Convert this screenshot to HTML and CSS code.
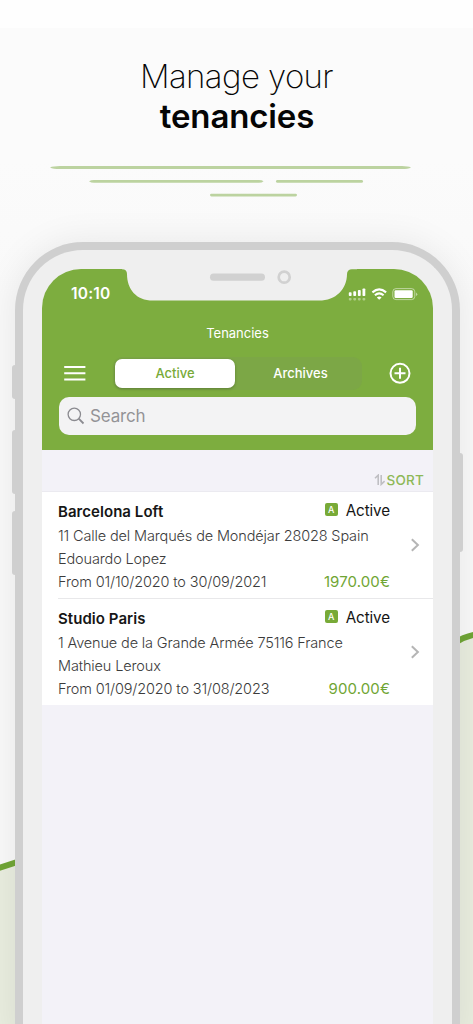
FILE: index.html
```html
<!DOCTYPE html>
<html lang="en">
<head>
<meta charset="utf-8">
<title>Manage your tenancies</title>
<link rel="stylesheet" href="styles.css">
</head>
<body>
<main class="stage">
  <svg class="landscape" width="473" height="1024" viewBox="0 0 473 1024" aria-hidden="true">
    <path class="hill" d="M0 867L20 860V1024H0Z"/>
    <path class="ridge" d="M-2 868.2L20 861.2"/>
    <path class="hill" d="M454 643Q465 637 475 636V1024H454Z"/>
    <path class="ridge" d="M454 643.2Q464 636.6 475 634.6"/>
  </svg>
  <h1 class="headline"><span class="light">Manage your</span><span class="strong">tenancies</span></h1>
  <svg class="strokes" width="473" height="40" viewBox="0 160 473 40" aria-hidden="true">
    <path d="M50 167.6Q53 166.1 60 166.1H402Q408 166.1 411 167.6Q408 169.1 402 169.1H60Q53 169.1 50 167.6Z"/>
    <path d="M89 181.3Q91 179.9 94 179.9H259Q262 179.9 263.5 181.3Q262 182.8 259 182.8H94Q91 182.8 89 181.3Z"/>
    <rect x="276" y="180" width="87" height="2.8" rx="1.4"/>
    <rect x="210" y="193.7" width="87" height="2.7" rx="1.4"/>
  </svg>
  <div class="device">
    <i class="key key-mute"></i><i class="key key-up"></i><i class="key key-down"></i><i class="key key-power"></i>
    <section class="screen">
      <svg class="notch" width="240" height="33" viewBox="0 0 240 33" aria-hidden="true">
        <path fill="#efefef" d="M0-1V0.3H80C83.5 0.3 85 2 85 5C85 20 94 31.6 111 31.6H277C294 31.6 305 20 305 5C305 2 307 0.3 310 0.3H315V-1Z" transform="translate(-80 0)"/>
        <rect x="88" y="4.6" width="55" height="7.2" rx="3.6" fill="#d1d1d1"/>
        <circle cx="162.2" cy="8.2" r="5.5" fill="none" stroke="#d1d1d1" stroke-width="2.7"/>
      </svg>
      <header class="topbar">
        <div class="status">
          <span class="time">10:10</span>
          <svg width="70" height="14" viewBox="348 286 70 14" aria-hidden="true">
            <g fill="#fff"><rect x="348.8" y="291.2" width="2.8" height="3.8" rx=".8"/><rect x="353.3" y="290.2" width="2.8" height="4.8" rx=".8"/><rect x="357.9" y="289" width="2.8" height="6" rx=".8"/><rect x="362.5" y="287.4" width="2.8" height="7.6" rx=".8"/></g>
            <g fill="#fff" opacity=".4"><rect x="348.8" y="297" width="2.8" height="2.4" rx=".8"/><rect x="353.3" y="297" width="2.8" height="2.4" rx=".8"/><rect x="357.9" y="297" width="2.8" height="2.4" rx=".8"/><rect x="362.5" y="297" width="2.8" height="2.4" rx=".8"/></g>
            <path d="M372.4 291.4Q379.2 285.3 386.1 291.4M374.9 294.2Q379.2 290.6 383.6 294.2" fill="none" stroke="#fff" stroke-width="2.1"/>
            <path d="M379.2 298.7L376.8 296.4Q379.2 294.4 381.6 296.4Z" fill="#fff"/>
            <rect x="392.8" y="287.6" width="22" height="11" rx="3.2" fill="none" stroke="#fff" opacity=".5"/>
            <rect x="394.5" y="289.3" width="18.2" height="7.6" rx="1.2" fill="#fff"/>
            <path d="M416 291.4Q418.6 293.2 416 295Z" fill="#fff" opacity=".5"/>
          </svg>
        </div>
        <div class="title">Tenancies</div>
        <nav class="controls">
          <svg width="22" height="16" viewBox="0 0 22 16" aria-hidden="true"><path d="M.2 2H21.4M.2 8.3H21.4M.2 14.4H21.4" stroke="#fff" stroke-width="2"/></svg>
          <div class="segments"><span class="segment selected">Active</span><span class="segment">Archives</span></div>
          <svg width="22" height="22" viewBox="0 0 22 22" aria-hidden="true"><g fill="none" stroke="#fff" stroke-width="2"><circle cx="11" cy="11.3" r="9.5"/><path d="M5.5 11.3H16.5M11 5.8V16.8"/></g></svg>
        </nav>
        <div class="search">
          <svg width="18" height="18" viewBox="0 0 18 18" aria-hidden="true"><g fill="none" stroke="#8b8b90" stroke-width="1.3"><circle cx="7.3" cy="7.3" r="6.2"/><path d="M11.7 11.7L16.5 16.5" stroke-width="1.8"/></g></svg>
          <span>Search</span>
        </div>
      </header>
      <div class="sort">
        <svg width="12" height="12" viewBox="0 0 12 12" aria-hidden="true"><path d="M1 4.3L4.2 1.2V11M7.2 1V10.4L10.6 7.2" fill="none" stroke="#bfbfc3" stroke-width="1.6"/></svg>
        <span>SORT</span>
      </div>
      <ul class="list">
        <li class="tenancy">
          <div class="info">
            <div class="row"><strong class="name">Barcelona Loft</strong><span class="state"><b>A</b><span>Active</span></span></div>
            <div class="row"><span>11 Calle del Marqués de Mondéjar 28028 Spain</span></div>
            <div class="row"><span>Edouardo Lopez</span></div>
            <div class="row"><span>From 01/10/2020 to 30/09/2021</span><span class="rent">1970.00€</span></div>
          </div>
          <svg class="chevron" width="10" height="14" viewBox="0 0 10 14" aria-hidden="true"><path d="M1.8 1.2L7.9 7L1.8 12.8" fill="none" stroke="#b5b5b5" stroke-width="2"/></svg>
        </li>
        <li class="tenancy">
          <div class="info">
            <div class="row"><strong class="name">Studio Paris</strong><span class="state"><b>A</b><span>Active</span></span></div>
            <div class="row"><span>1 Avenue de la Grande Armée 75116 France</span></div>
            <div class="row"><span>Mathieu Leroux</span></div>
            <div class="row"><span>From 01/09/2020 to 31/08/2023</span><span class="rent">900.00€</span></div>
          </div>
          <svg class="chevron" width="10" height="14" viewBox="0 0 10 14" aria-hidden="true"><path d="M1.8 1.2L7.9 7L1.8 12.8" fill="none" stroke="#b5b5b5" stroke-width="2"/></svg>
        </li>
      </ul>
    </section>
  </div>
</main>
</body>
</html>
```
FILE: styles.css
```css
* { box-sizing: border-box; }
body { margin: 0; font-family: Inter, "Liberation Sans", sans-serif; }
.stage {
  position: relative;
  width: 473px;
  height: 1024px;
  overflow: hidden;
  background: linear-gradient(#fefefe 28px, #fbfbfb 28px, #fbfbfb 160px, #f9f9f9 300px);
}
.landscape { position: absolute; left: 0; top: 0; }
.hill { fill: #e9eddf; }
.ridge { fill: none; stroke: #70a536; stroke-width: 6; }
.headline {
  margin: 0;
  padding-top: 57px;
  height: 160px;
  display: flex;
  flex-direction: column;
  align-items: center;
  font-size: 33px;
  line-height: 39.5px;
  color: #050505;
}
.light { font-weight: 200; letter-spacing: -0.6px; }
.strong { font-weight: 600; letter-spacing: -0.15px; padding-left: 1px; }
.strokes { display: block; fill: #bcd3a0; }
.device {
  position: relative;
  width: 445px;
  height: 800px;
  margin: 42px 0 0 15px;
  padding: 19px 19px 0;
  border: 8px solid #cfcfcf;
  border-bottom: 0;
  border-radius: 68px 68px 0 0;
  background: #efefef;
  box-shadow: 0 0 36px rgba(0, 0, 0, 0.08);
}
.key { position: absolute; width: 4px; background: #cfcfcf; }
.key-mute { left: -11px; top: 115px; height: 34px; border-radius: 3px 0 0 3px; }
.key-up { left: -11px; top: 180px; height: 64px; border-radius: 3px 0 0 3px; }
.key-down { left: -11px; top: 261px; height: 64px; border-radius: 3px 0 0 3px; }
.key-power { right: -11px; top: 203px; height: 99px; border-radius: 0 3px 3px 0; }
.screen {
  position: relative;
  width: 391px;
  height: 100%;
  overflow: hidden;
  border-radius: 39px 39px 0 0;
  background: #f3f2f8;
}
.notch { position: absolute; left: 80px; top: 0; }
.topbar { height: 181px; background: #7dad3f; color: #fff; }
.status {
  height: 48px;
  padding: 1px 15px 0 29px;
  display: flex;
  align-items: center;
  justify-content: space-between;
}
.time { font-size: 15.5px; font-weight: 600; letter-spacing: 0.2px; }
.title { height: 32px; line-height: 33px; text-align: center; font-size: 13px; }
.controls {
  height: 48px;
  padding: 0 22px;
  display: flex;
  align-items: center;
}
.segments {
  width: 249px;
  height: 33px;
  margin: 0 27px 0 27px;
  padding: 2px;
  display: flex;
  border-radius: 9px;
  background: #7ca746;
}
.segment { flex: 1; padding-left: 6px; line-height: 29px; text-align: center; font-size: 13px; font-weight: 500; }
.selected { flex: 0 0 120px; padding-left: 0; border-radius: 7px; background: #fff; color: #78aa37; box-shadow: 0 1px 3px rgba(0, 0, 0, .25); }
.search {
  width: 357px;
  height: 37.6px;
  margin-left: 17px;
  padding-left: 8px;
  display: flex;
  align-items: center;
  gap: 5px;
  border-radius: 10px;
  background: #f3f3f4;
  color: #939397;
  font-size: 17px;
  letter-spacing: -0.15px;
}
.sort {
  height: 41px;
  padding: 19px 9px 0 0;
  display: flex;
  align-items: center;
  justify-content: flex-end;
  gap: 1px;
  color: #8db856;
  font-size: 13.5px;
  font-weight: 500;
  letter-spacing: 0.2px;
}
.list { margin: 0; padding: 0; list-style: none; border-top: 1px solid #ebeaf0; background: #fff; }
.tenancy {
  height: 107px;
  padding: 8px 13px 0 16px;
  display: flex;
  justify-content: space-between;
  background: linear-gradient(#e8e8ea, #e8e8ea) 16px 100% / 100% 1px no-repeat #fff;
}
.tenancy:last-child { height: 106px; background: #fff; }
.info { width: 332px; color: #3b3b3b; font-size: 14.5px; font-weight: 300; line-height: 23px; letter-spacing: -0.14px; }
.row { height: 23px; display: flex; justify-content: space-between; white-space: nowrap; }
.row:first-child { height: 24px; }
.name { color: #161616; font-weight: 600; font-size: 15px; letter-spacing: 0.05px; }
.state { display: flex; gap: 8px; font-size: 15.2px; font-weight: 400; line-height: 21px; letter-spacing: -0.1px; color: #151515; }
.state b { width: 13px; height: 13px; margin-top: 3px; border-radius: 2px; background: #78aa37; color: #fff; font-size: 9px; font-weight: 500; line-height: 13px; text-align: center; }
.rent { color: #70a533; font-size: 15px; font-weight: 400; letter-spacing: 0.1px; }
.chevron { margin-top: 38px; }
```
